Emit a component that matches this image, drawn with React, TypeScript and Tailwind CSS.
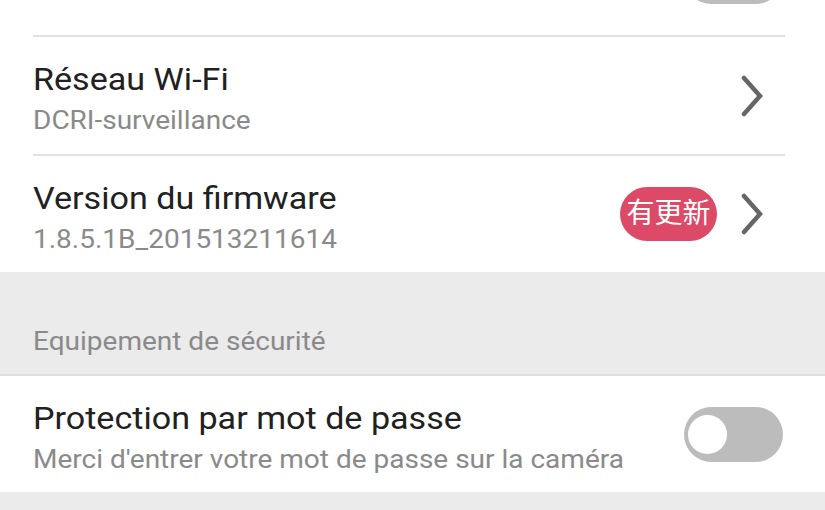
import React from "react";

const Chevron = () => (
  <svg width="22" height="42" viewBox="0 0 22 42" className="shrink-0">
    <polyline
      points="3,3 19,21 3,39"
      fill="none"
      stroke="#666666"
      strokeWidth="4.5"
      strokeLinecap="round"
      strokeLinejoin="miter"
    />
  </svg>
);

const Toggle = ({ className = "" }: { className?: string }) => (
  <div className={`w-[99px] h-[55px] rounded-full bg-[#bcbcbc] flex items-center pl-[4px] shrink-0 ${className}`}>
    <div className="w-[39px] h-[39px] rounded-full bg-white" />
  </div>
);

const Divider = () => <div className="ml-[33px] mr-[40px] h-[2px] bg-[#e2e2e2]" />;

const Title = ({ children }: { children: React.ReactNode }) => (
  <div className="text-[31px] leading-[42px] text-[#212121] whitespace-nowrap origin-left scale-x-[1.1]">{children}</div>
);

const Sub = ({ children }: { children: React.ReactNode }) => (
  <div className="mt-[2px] text-[25px] leading-[35px] text-[#8a8a8a] whitespace-nowrap origin-left scale-x-[1.12]">{children}</div>
);

export default function App() {
  return (
    <div
      className="w-[825px] h-[510px] overflow-hidden bg-white"
      style={{ fontFamily: "Roboto, 'Noto Sans CJK SC', sans-serif" }}
    >
      {/* top partial row */}
      <div className="h-[35px] flex justify-end pr-[42px] overflow-hidden">
        <Toggle className="-mt-[51px]" />
      </div>
      <Divider />
      {/* Wi-Fi row */}
      <div className="h-[117px] flex items-center pl-[33px] pr-[62px]">
        <div className="flex-1 self-start pt-[22px]">
          <Title>Réseau Wi-Fi</Title>
          <Sub>DCRI-surveillance</Sub>
        </div>
        <Chevron />
      </div>
      <Divider />
      {/* Firmware row */}
      <div className="h-[116px] flex items-center pl-[33px] pr-[62px]">
        <div className="flex-1 self-start pt-[22px]">
          <Title>Version du firmware</Title>
          <Sub>1.8.5.1B_201513211614</Sub>
        </div>
        <div className="h-[54px] w-[97px] rounded-full bg-[#dc4a67] text-white text-[28px] flex items-center justify-center mr-[24px] leading-none">
          有更新
        </div>
        <Chevron />
      </div>
      {/* section header */}
      <div className="h-[102px] bg-[#ebebeb] flex items-end pl-[33px] pb-[16px]">
        <div className="text-[25px] leading-[32px] text-[#8a8a8a] whitespace-nowrap origin-left scale-x-[1.12]">Equipement de sécurité</div>
      </div>
      <div className="h-[2px] bg-[#dedede]" />
      {/* password row */}
      <div className="h-[116px] flex items-center pl-[33px] pr-[42px] bg-white">
        <div className="flex-1 self-start pt-[22px]">
          <Title>Protection par mot de passe</Title>
          <Sub>Merci d'entrer votre mot de passe sur la caméra</Sub>
        </div>
        <Toggle />
      </div>
      <div className="h-[30px] bg-[#ebebeb]" />
    </div>
  );
}
